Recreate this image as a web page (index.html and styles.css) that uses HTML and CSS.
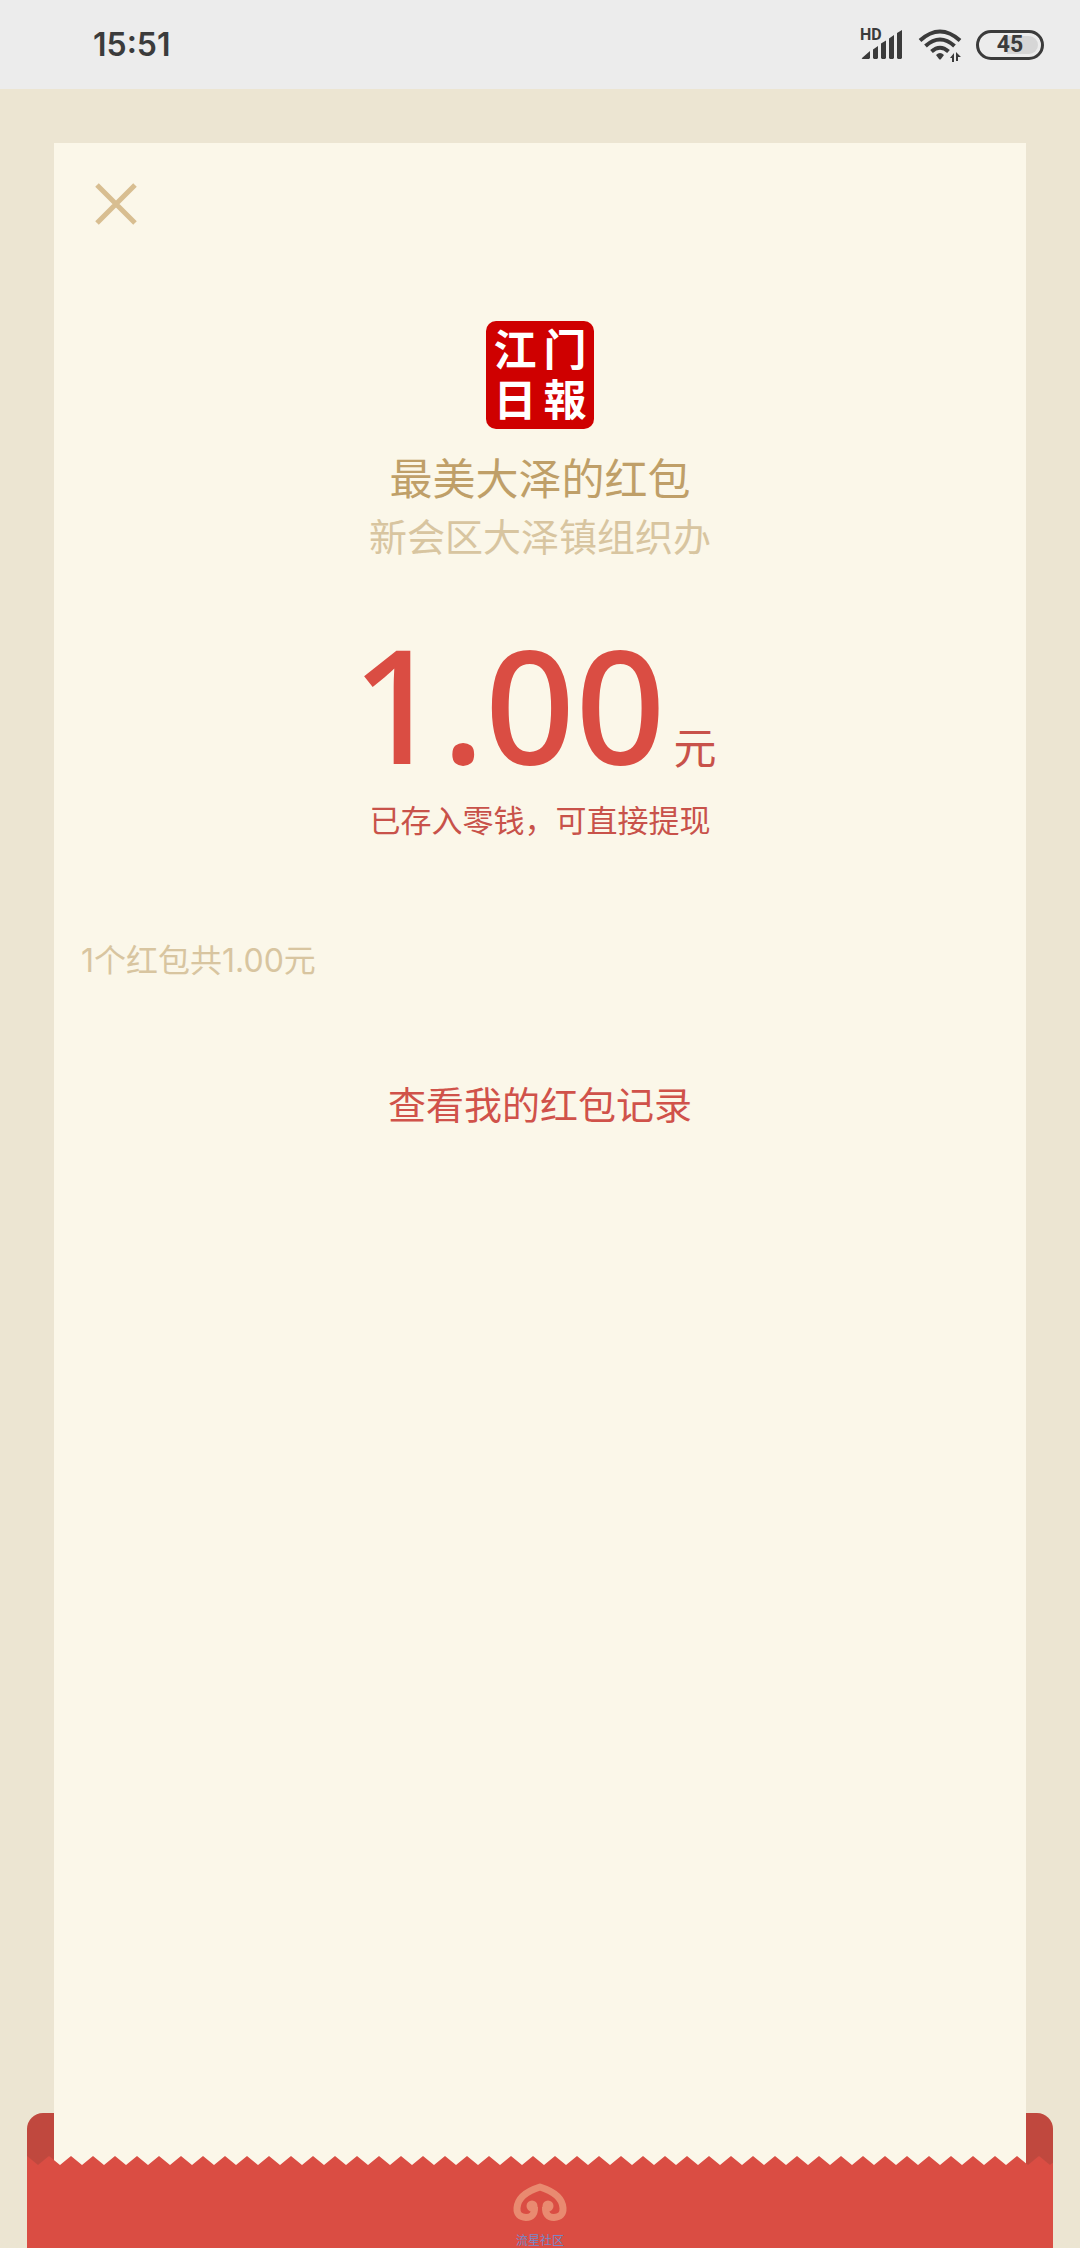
FILE: index.html
```html
<!DOCTYPE html>
<html lang="zh-CN">
<head>
<meta charset="utf-8">
<meta name="viewport" content="width=device-width, initial-scale=1">
<title>最美大泽的红包</title>
<link rel="stylesheet" href="styles.css">
</head>
<body>
<header class="status">
  <time class="clock">15:51</time>
  <div class="indicators">
    <svg class="signal" viewBox="0 0 44 36" aria-hidden="true">
      <text class="hd" x="0" y="13">HD</text>
      <path d="M2 31L10 24V31L9 32H3Q1 32 2 31ZM13 22.500L18 19V31L17 32H14L13 31ZM21 16.500L26 13.500V31L25 32H22L21 31ZM29 11.500L34 8V31L33 32H30L29 31ZM37 6L42 3V31L41 32H38L37 31Z"/>
    </svg>
    <svg class="wifi" viewBox="0 0 44 36" aria-hidden="true">
      <g class="waves">
        <path d="M2 13.500Q22 -4.500 42 13.500"/>
        <path d="M7.500 19Q22 6 36.500 19"/>
        <path d="M13.500 24.500Q22 17 30.500 24.500"/>
      </g>
      <path d="M18 28Q22 24 26 28L23 32Q22 33 21 32ZM36 26V35H34V31H32ZM38 25L43 30H40V34H38Z"/>
    </svg>
    <div class="battery"><span class="level">45</span></div>
  </div>
</header>
<main class="page">
  <section class="card">
    <button class="close" type="button" aria-label="关闭">
      <svg viewBox="0 0 42 42" aria-hidden="true"><path d="M2 2L40 40M40 2L2 40"/></svg>
    </button>
    <div class="logo"><span>江</span><span>门</span><span>日</span><span>報</span></div>
    <h1 class="title">最美大泽的红包</h1>
    <p class="sender">新会区大泽镇组织办</p>
    <p class="amount"><span class="number">1.00</span><span class="unit">元</span></p>
    <p class="note">已存入零钱，可直接提现</p>
    <p class="count">1个红包共1.00元</p>
    <a class="records" href="#records">查看我的红包记录</a>
  </section>
  <footer class="envelope">
    <svg class="teeth" aria-hidden="true">
      <defs>
        <pattern id="tooth" width="22" height="10" patternUnits="userSpaceOnUse">
          <path d="M0 0L11 9L22 0V10H0Z"/>
        </pattern>
      </defs>
      <rect width="100%" height="10" fill="url(#tooth)"/>
    </svg>
    <div class="front">
      <svg class="emblem" viewBox="0 0 54 38" aria-hidden="true">
        <path d="M21.500 24Q22 34.500 13 34.500Q3.500 34 4 25Q5 11 27 4Q49 11 50 25Q50.500 34 41 34.500Q32 34.500 32.500 24"/>
        <circle cx="19" cy="23" r="5.500"/>
        <circle cx="35" cy="23" r="5.500"/>
      </svg>
      <span class="community">流星社区</span>
    </div>
  </footer>
</main>
</body>
</html>
```
FILE: styles.css
```css
* { box-sizing: border-box; }
body {
  margin: 0;
  min-height: 100vh;
  display: flex;
  flex-direction: column;
  background: #ece5d2;
  font-family: Inter, "Noto Sans CJK SC", sans-serif;
}
h1, p { margin: 0; font-weight: 400; }
svg { display: block; }

.status {
  height: 89px;
  flex: none;
  display: flex;
  align-items: center;
  justify-content: space-between;
  padding: 0 36px 0 93px;
  background: #ececec;
  color: #3b3b3b;
}
.clock { font-size: 32px; font-weight: 600; }
.indicators { display: flex; align-items: center; gap: 14px; }
.signal, .wifi { width: 44px; height: 36px; fill: #3b3b3b; overflow: visible; }
.hd { font: 700 16px Roboto, sans-serif; }
.waves { fill: none; stroke: #3b3b3b; stroke-width: 4; }
.battery {
  width: 68px;
  height: 30px;
  padding: 3px;
  border: 3px solid #3b3b3b;
  border-radius: 15px;
}
.level {
  display: block;
  height: 18px;
  border-radius: 9px;
  background: linear-gradient(to right, transparent 45%, #d6d6d6 45%);
  font: 700 23px/18px Roboto, sans-serif;
  text-align: center;
}

.page {
  flex: 1;
  display: flex;
  flex-direction: column;
  padding-top: 54px;
}
.card {
  flex: 1;
  margin: 0 54px -10px;
  padding: 40px 27px;
  display: flex;
  flex-direction: column;
  align-items: center;
  background: #fbf7e9;
  position: relative;
  z-index: 1;
}
.close {
  align-self: flex-start;
  margin-left: 14px;
  padding: 0;
  border: 0;
  background: none;
}
.close svg { width: 42px; height: 42px; stroke: #d8be91; stroke-width: 5; }
.logo {
  width: 108px;
  height: 108px;
  margin-top: 96px;
  padding: 4px;
  display: grid;
  grid-template-columns: 1fr 1fr;
  place-items: center;
  border-radius: 10px;
  background: #cf0000;
  color: #fff;
  font-size: 43px;
  font-weight: 700;
  line-height: 48px;
}
.title { margin-top: 20px; font-size: 43px; line-height: 60px; color: #bf9f68; }
.sender { font-size: 38px; line-height: 56px; color: #d8c5a0; }
.amount {
  margin-top: 58px;
  padding-right: 12px;
  display: flex;
  align-items: baseline;
  gap: 8px;
  color: #da4d43;
}
.number { font: 500 158px/160px "Noto Sans", sans-serif; }
.unit { font-size: 43px; line-height: 43px; color: #c8524a; }
.note { margin-top: 14px; font-size: 31px; line-height: 48px; color: #c8524a; }
.count {
  align-self: flex-start;
  margin-top: 92px;
  font-size: 32px;
  line-height: 48px;
  color: #d8c5a0;
}
.records {
  margin-top: 92px;
  font-size: 38px;
  line-height: 56px;
  color: #d0524a;
  text-decoration: none;
}

.envelope {
  flex: none;
  margin: -43px 27px 0;
  padding-top: 43px;
  border-radius: 16px 16px 0 0;
  background: #c0483e;
}
.teeth {
  position: relative;
  z-index: 2;
  width: 100%;
  height: 10px;
  margin-bottom: -1px;
  fill: #da4d43;
}
.front {
  position: relative;
  z-index: 2;
  min-height: 83px;
  padding-top: 18px;
  display: flex;
  flex-direction: column;
  align-items: center;
  background: #da4d43;
}
.emblem { width: 54px; height: 38px; fill: none; stroke: #e98a70; stroke-width: 7; stroke-linejoin: round; }
.emblem circle { fill: #e98a70; stroke: none; }
.community { margin-top: 13px; font-size: 12px; line-height: 14px; color: #7688c8; }
```
